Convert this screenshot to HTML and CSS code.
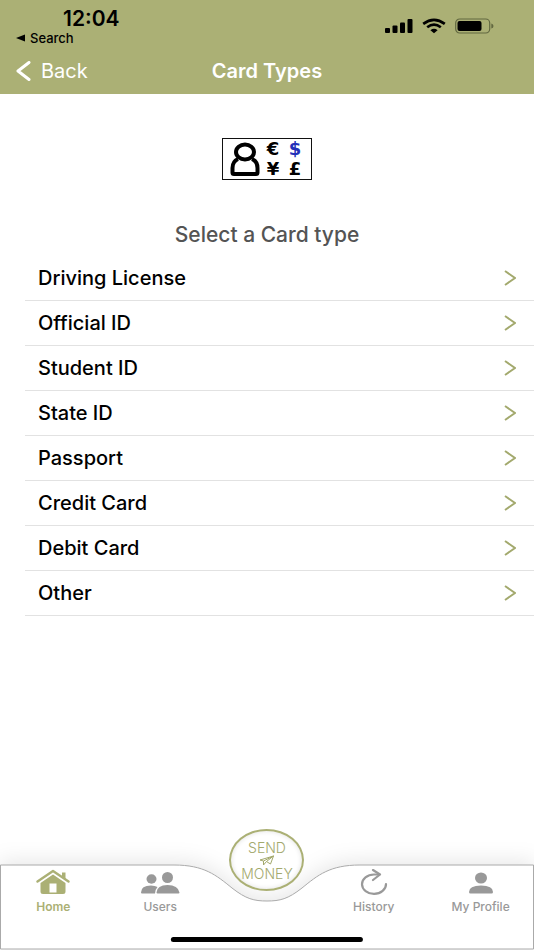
FILE: index.html
```html
<!DOCTYPE html>
<html lang="en">
<head>
<meta charset="utf-8">
<meta name="viewport" content="width=device-width, initial-scale=1">
<title>Card Types</title>
<link rel="stylesheet" href="styles.css">
</head>
<body>
<header class="top">
  <div class="status">
    <div class="clock">
      <span class="time">12:04</span>
      <a class="return" href="#"><svg width="10" height="8" viewBox="0 0 10 8" aria-hidden="true"><path d="M0 4L9 0.5V7.5Z"/></svg>Search</a>
    </div>
    <div class="signals">
      <svg width="28" height="16" viewBox="0 0 28 16" aria-hidden="true"><rect x="0" y="10" width="5" height="5" rx="1"/><rect x="7.500" y="7.500" width="5" height="7.500" rx="1"/><rect x="15" y="4.500" width="5" height="10.500" rx="1"/><rect x="22.500" y="1" width="5" height="14" rx="1"/></svg>
      <svg width="24" height="16" viewBox="0 0 24 16" aria-hidden="true"><g fill="none" stroke="#000" stroke-width="2.700"><path d="M1.200 5.800Q12 -2.200 22.800 5.800"/><path d="M5.200 9.300Q12 4 18.800 9.300"/></g><path d="M8.400 12.200Q12 9.300 15.600 12.200L12 15.300Z"/></svg>
      <svg width="39" height="16" viewBox="0 0 39 16" aria-hidden="true"><rect x="0.700" y="1" width="34" height="14" rx="4" fill="none" stroke="#626840" stroke-width="1.200"/><rect x="2.500" y="3" width="24" height="10" rx="2"/><path d="M36.300 5.500Q38.500 6 38.500 8T36.300 10.500Z" fill="#626840"/></svg>
    </div>
  </div>
  <nav class="bar">
    <a class="back" href="#"><svg width="15" height="20" viewBox="0 0 15 20" aria-hidden="true"><path d="M13 1.500L2 10L13 18.500" fill="none" stroke="#fff" stroke-width="3" stroke-linecap="round" stroke-linejoin="round"/></svg>Back</a>
    <h1>Card Types</h1>
  </nav>
</header>
<main>
  <div class="emblem">
    <svg width="30" height="34" viewBox="0 0 30 34" role="img" aria-label="Person"><g fill="none" stroke="#000" stroke-width="4"><ellipse cx="15" cy="10" rx="9" ry="7.500"/><path d="M8 17Q2.500 19.500 2.500 26V30.500Q2.500 32 4 32H26Q27.500 32 27.500 30.500V26Q27.500 19.500 22 17"/></g></svg>
    <div class="currency"><span>€</span><span class="dollar">$</span><span>¥</span><span>£</span></div>
  </div>
  <h2>Select a Card type</h2>
  <ul class="types">
    <li><a href="#">Driving License<svg viewBox="0 0 12 16"><path d="M1 1L11 8L1 15"/></svg></a></li>
    <li><a href="#">Official ID<svg viewBox="0 0 12 16"><path d="M1 1L11 8L1 15"/></svg></a></li>
    <li><a href="#">Student ID<svg viewBox="0 0 12 16"><path d="M1 1L11 8L1 15"/></svg></a></li>
    <li><a href="#">State ID<svg viewBox="0 0 12 16"><path d="M1 1L11 8L1 15"/></svg></a></li>
    <li><a href="#">Passport<svg viewBox="0 0 12 16"><path d="M1 1L11 8L1 15"/></svg></a></li>
    <li><a href="#">Credit Card<svg viewBox="0 0 12 16"><path d="M1 1L11 8L1 15"/></svg></a></li>
    <li><a href="#">Debit Card<svg viewBox="0 0 12 16"><path d="M1 1L11 8L1 15"/></svg></a></li>
    <li><a href="#">Other<svg viewBox="0 0 12 16"><path d="M1 1L11 8L1 15"/></svg></a></li>
  </ul>
</main>
<footer>
  <svg class="shelf" viewBox="0 0 534 86" preserveAspectRatio="none" aria-hidden="true"><path d="M0.500 1H174C204 1 216 11 232 24C246 35 254 37 267 37S288 35 302 24C318 11 330 1 360 1H533.500V85H0.500Z"/></svg>
  <nav class="tabs">
    <a class="tab active" href="#">
      <svg width="34" height="28" viewBox="0 0 34 28" aria-hidden="true"><path d="M1.500 12.500L17 2L32.500 12.500" fill="none" stroke="currentColor" stroke-width="2.400" stroke-linecap="round" stroke-linejoin="round"/><path d="M26 3.500H29.500V10L26 7.500Z"/><path fill-rule="evenodd" d="M17 5.500L29.500 14V22.500Q29.500 25 27 25H7Q4.500 25 4.500 22.500V14ZM13.500 14.500V23.500H20.500V14.500Z"/></svg>
      Home</a>
    <a class="tab" href="#">
      <svg width="40" height="28" viewBox="0 0 40 28" aria-hidden="true"><ellipse cx="11.500" cy="10" rx="5" ry="4.700"/><path d="M1 23.500Q1 16.500 11 16.500Q15 16.500 17.500 18Q15.500 20 15 24.500H2Q1 24.500 1 23.500Z"/><ellipse cx="27.500" cy="8.500" rx="5.500" ry="5.500"/><path d="M16.500 23.500Q17 16 27.500 16T39.500 23.500Q39.500 24.500 38.500 24.500H17.500Q16.500 24.500 16.500 23.500Z"/></svg>
      Users</a>
    <button class="send" type="button">
      <span>SEND</span>
      <svg width="16" height="11" viewBox="0 0 16 11" aria-hidden="true"><path d="M1 5L14.500 1L11.500 9L7.500 6.500L14.500 1L4.500 6ZM4.500 6V10L7.500 6.500"/></svg>
      <span>MONEY</span>
    </button>
    <a class="tab" href="#">
      <svg width="28" height="28" viewBox="0 0 28 28" aria-hidden="true"><g fill="none" stroke="currentColor" stroke-width="2.200" stroke-linecap="round" stroke-linejoin="round"><path d="M19.500 5.500H14A12 9.700 0 1 0 26 15"/><path d="M13 1L20 5.500L13 11"/></g></svg>
      History</a>
    <a class="tab" href="#">
      <svg width="26" height="28" viewBox="0 0 26 28" aria-hidden="true"><ellipse cx="13" cy="9" rx="6" ry="5.500"/><path d="M1 23Q1 16.500 13 16.500T25 23Q25 24.500 23.500 24.500H2.500Q1 24.500 1 23Z"/></svg>
      My Profile</a>
  </nav>
  <div class="grip"></div>
</footer>
</body>
</html>
```
FILE: styles.css
```css
* { box-sizing: border-box; }
body {
  margin: 0;
  min-height: 100vh;
  display: flex;
  flex-direction: column;
  background: #fff;
  color: #000;
  font-family: Inter, "Liberation Sans", sans-serif;
}
a { color: inherit; text-decoration: none; }
h1, h2, ul { margin: 0; padding: 0; font-weight: 500; }
svg { flex: none; }

.top { background: #abb075; }
.status {
  display: flex;
  justify-content: space-between;
  align-items: flex-start;
  height: 48px;
  padding: 8px 40px 0 16px;
}
.clock { display: flex; flex-direction: column; }
.time {
  padding-left: 47px;
  font-size: 21px;
  line-height: 22px;
  font-weight: 600;
}
.return {
  display: flex;
  align-items: center;
  gap: 4px;
  font-size: 13px;
  line-height: 16px;
  font-weight: 500;
}
.signals { display: flex; gap: 9px; padding-top: 10px; }

.bar {
  display: grid;
  grid-template-columns: 1fr auto 1fr;
  align-items: center;
  height: 46px;
  padding: 0 16px;
  color: #fff;
}
.back {
  display: flex;
  align-items: center;
  gap: 10px;
  font-size: 20px;
}
h1 { font-size: 20px; font-weight: 600; }

main {
  flex: 1;
  display: flex;
  flex-direction: column;
  align-items: center;
  padding-top: 44px;
}
.emblem {
  display: flex;
  align-items: center;
  gap: 2px;
  width: 90px;
  height: 42px;
  padding-left: 7px;
  border: 1px solid #111;
}
.currency {
  display: grid;
  grid-template-columns: 22px 22px;
  font: 700 18px/20px "DejaVu Sans", sans-serif;
  text-align: center;
}
.dollar { color: #2330b8; }
h2 {
  margin-top: 43px;
  color: #545454;
  font-size: 21px;
  line-height: 24px;
}
.types {
  align-self: stretch;
  margin: 9px 0 0 25px;
  list-style: none;
}
.types a {
  display: flex;
  align-items: center;
  justify-content: space-between;
  height: 45px;
  padding: 0 18px 0 13px;
  border-bottom: 1px solid #e2e2e2;
  font-size: 20px;
  font-weight: 500;
}
.types svg {
  width: 12px;
  height: 16px;
  fill: none;
  stroke: #a3a96d;
  stroke-width: 2;
}

footer { position: relative; height: 86px; }
.shelf {
  position: absolute;
  inset: 0;
  width: 100%;
  height: 100%;
  overflow: visible;
  fill: #fff;
  stroke: #aaa;
  filter: drop-shadow(0 -4px 10px rgba(0, 0, 0, 0.09));
}
.tabs {
  position: relative;
  display: grid;
  grid-template-columns: repeat(5, 1fr);
}
.tab {
  display: flex;
  flex-direction: column;
  align-items: center;
  gap: 3px;
  padding-top: 5px;
  color: #999;
  font-size: 12px;
  line-height: 14px;
  font-weight: 500;
  white-space: nowrap;
}
.tab svg, .grip { fill: currentColor; }
.active { color: #abb075; font-weight: 600; }
.send {
  justify-self: center;
  display: flex;
  flex-direction: column;
  align-items: center;
  justify-content: center;
  width: 75px;
  height: 62px;
  margin: -35px 0 0;
  padding: 0;
  border: 2px solid #abb075;
  border-radius: 50%;
  background: #fff;
  box-shadow: inset 0 0 5px rgba(0, 0, 0, 0.12);
  color: #a3a96d;
  font: 300 14px/15px Inter, sans-serif;
}
.send svg { fill: none; stroke: currentColor; stroke-linejoin: round; }
.grip {
  position: absolute;
  bottom: 8px;
  left: 50%;
  width: 36%;
  height: 5px;
  border-radius: 3px;
  background: #000;
  transform: translateX(-50%);
}
```
